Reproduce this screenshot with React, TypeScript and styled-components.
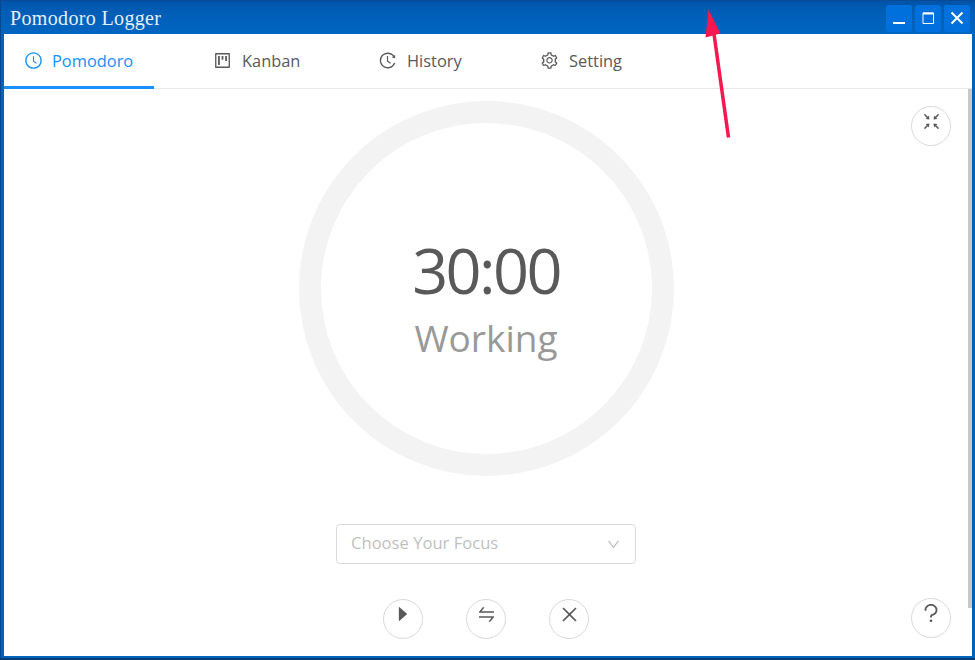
import React from "react";
import styled, { createGlobalStyle } from "styled-components";
import {
  AiOutlineClockCircle,
  AiOutlineProject,
  AiOutlineHistory,
  AiOutlineSetting,
  AiOutlineDown,
  AiOutlineFullscreenExit,
  AiOutlineSwap,
  AiOutlineClose,
  AiOutlineQuestion,
  AiFillCaretRight,
} from "react-icons/ai";

const Global = createGlobalStyle`
  html, body { margin: 0; padding: 0; background: #fff; }
  body { font-family: "Open Sans", "Noto Sans", "Liberation Sans", sans-serif; }
`;

const Frame = styled.div`
  position: relative;
  width: 975px;
  height: 660px;
  box-sizing: border-box;
  display: flex;
  flex-direction: column;
  background: #0062b8;
  border-left: 1px solid #08478c;
  border-bottom: 2px solid #0a3d73;
  overflow: hidden;
`;

const TitleBar = styled.header`
  height: 34px;
  flex: none;
  box-sizing: border-box;
  display: flex;
  align-items: center;
  justify-content: space-between;
  padding: 4px 5px 3px 9px;
  background: linear-gradient(#0053a8 0, #005db5 30%, #0066c2 100%);
  border-top: 1px solid #0a4a96;
`;

const AppTitle = styled.span`
  font-family: "Liberation Serif", serif;
  font-size: 20px;
  letter-spacing: 0.35px;
  color: #e6eff8;
`;

const WindowControls = styled.div`
  display: flex;
  gap: 3px;
`;

const WindowButton = styled.button`
  width: 26px;
  height: 27px;
  padding: 0;
  border: none;
  border-radius: 3px;
  background: #0070dc;
  display: flex;
  align-items: center;
  justify-content: center;
`;

const Window = styled.div`
  flex: 1;
  min-height: 0;
  display: flex;
  flex-direction: column;
  margin: 0 3px 2px 3px;
  background: #fff;
`;

const TabBar = styled.nav`
  height: 55px;
  flex: none;
  box-sizing: border-box;
  display: flex;
  gap: 37px;
  border-bottom: 1px solid #e8e8e8;
`;

const Tab = styled.div<{ $active?: boolean; $width: number }>`
  width: ${(p) => p.$width}px;
  height: 55px;
  flex: none;
  box-sizing: border-box;
  display: flex;
  align-items: center;
  gap: 10px;
  padding: 1px 0 0 20px;
  font-size: 16.4px;
  color: ${(p) => (p.$active ? "#1890ff" : "#595959")};
  border-bottom: 3px solid ${(p) => (p.$active ? "#1890ff" : "transparent")};
  &:first-child {
    margin-right: 2px;
    gap: 9px;
  }
  svg {
    flex: none;
  }
`;

const Body = styled.div`
  position: relative;
  flex: 1;
  min-height: 0;
  display: flex;
`;

const Main = styled.main`
  flex: 1;
  display: flex;
  flex-direction: column;
  align-items: center;
  padding-top: 12px;
`;

const Track = styled.div`
  width: 375px;
  height: 375px;
  box-sizing: border-box;
  border: 22px solid #f3f3f3;
  border-radius: 50%;
  padding-top: 20px;
  display: flex;
  flex-direction: column;
  align-items: center;
  justify-content: center;
`;

const Time = styled.div`
  font-size: 63px;
  line-height: 70px;
  letter-spacing: -2.6px;
  color: #595959;
`;

const State = styled.div`
  font-size: 37px;
  line-height: 50px;
  margin-top: 8px;
  color: #999;
`;

const Select = styled.div`
  width: 300px;
  height: 40px;
  box-sizing: border-box;
  margin-top: 48px;
  padding: 0 14px;
  display: flex;
  align-items: center;
  justify-content: space-between;
  border: 1px solid #d9d9d9;
  border-radius: 4px;
  color: #bfbfbf;
`;

const Placeholder = styled.span`
  font-size: 16.6px;
  margin-bottom: 4px;
`;

const Controls = styled.div`
  margin-top: 35px;
  display: flex;
  gap: 43px;
`;

const RoundButton = styled.button`
  width: 40px;
  height: 40px;
  box-sizing: border-box;
  padding: 0 0 10px;
  border: 1px solid #d9d9d9;
  border-radius: 50%;
  background: #fff;
  color: #595959;
  display: flex;
  align-items: center;
  justify-content: center;
`;

const FloatingButton = styled(RoundButton)<{ $top: number }>`
  position: absolute;
  right: 21px;
  top: ${(p) => p.$top}px;
`;

const ScrollThumb = styled.div`
  width: 4px;
  height: 519px;
  flex: none;
  background: #c8c8c8;
`;

const Annotation = styled.svg`
  position: absolute;
  left: 0;
  top: 0;
  pointer-events: none;
`;

export default function App() {
  return (
    <>
      <Global />
      <Frame>
        <TitleBar>
          <AppTitle>Pomodoro Logger</AppTitle>
          <WindowControls>
            <WindowButton aria-label="Minimize">
              <svg width="16" height="16" viewBox="0 0 16 16">
                <path d="M2 13h12" stroke="#fff" strokeWidth="2" />
              </svg>
            </WindowButton>
            <WindowButton aria-label="Maximize">
              <svg width="16" height="16" viewBox="0 0 16 16">
                <path d="M3 3h10.5v10.5H3z" fill="none" stroke="#fff" strokeWidth="1" />
                <path d="M3 3.5h10.5" stroke="#fff" strokeWidth="2" />
              </svg>
            </WindowButton>
            <WindowButton aria-label="Close">
              <svg width="16" height="16" viewBox="0 0 16 16">
                <path d="M2.5 2.5l11 11M13.5 2.5l-11 11" stroke="#fff" strokeWidth="2" />
              </svg>
            </WindowButton>
          </WindowControls>
        </TitleBar>
        <Window>
          <TabBar>
            <Tab $active $width={150}>
              <AiOutlineClockCircle size={19} />
              Pomodoro
            </Tab>
            <Tab $width={128}>
              <AiOutlineProject size={19} />
              Kanban
            </Tab>
            <Tab $width={125}>
              <AiOutlineHistory size={19} />
              History
            </Tab>
            <Tab $width={125}>
              <AiOutlineSetting size={19} />
              Setting
            </Tab>
          </TabBar>
          <Body>
            <Main>
              <Track>
                <Time>30:00</Time>
                <State>Working</State>
              </Track>
              <Select>
                <Placeholder>Choose Your Focus</Placeholder>
                <AiOutlineDown size={15} color="#bfbfbf" />
              </Select>
              <Controls>
                <RoundButton aria-label="Start">
                  <AiFillCaretRight size={20} />
                </RoundButton>
                <RoundButton aria-label="Switch">
                  <AiOutlineSwap size={21} />
                </RoundButton>
                <RoundButton aria-label="Stop">
                  <AiOutlineClose size={21} />
                </RoundButton>
              </Controls>
            </Main>
            <ScrollThumb />
            <FloatingButton $top={17} aria-label="Exit fullscreen">
              <AiOutlineFullscreenExit size={21} />
            </FloatingButton>
            <FloatingButton $top={509} aria-label="Help">
              <AiOutlineQuestion size={24} />
            </FloatingButton>
          </Body>
        </Window>
        <Annotation width="975" height="660" viewBox="0 0 975 660">
          <path d="M727.5 137.5L713 34" stroke="#f5174f" strokeWidth="3.5" fill="none" />
          <path d="M707.5 9.5L719.5 33.5L704.5 37.5Z" fill="#f5174f" />
        </Annotation>
      </Frame>
    </>
  );
}
